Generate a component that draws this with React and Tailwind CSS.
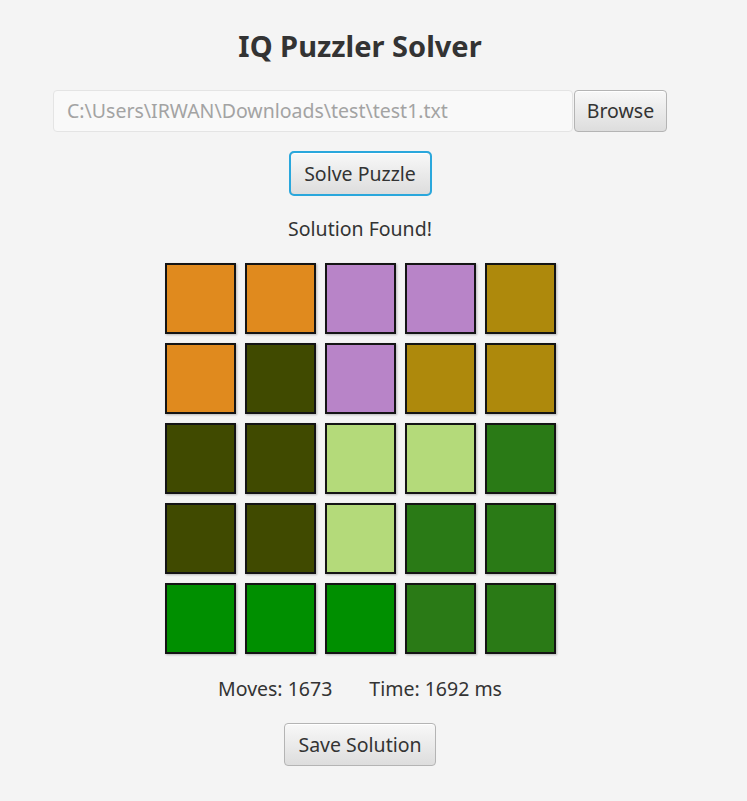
import React from 'react';

const grid = [
  ['#e08a1e', '#e08a1e', '#b884c8', '#b884c8', '#ae890c'],
  ['#e08a1e', '#404a00', '#b884c8', '#ae890c', '#ae890c'],
  ['#404a00', '#404a00', '#b4da7a', '#b4da7a', '#2a7a16'],
  ['#404a00', '#404a00', '#b4da7a', '#2a7a16', '#2a7a16'],
  ['#008f00', '#008f00', '#008f00', '#2a7a16', '#2a7a16'],
];

const btn =
  'rounded-[4px] border border-[#b4b4b4] bg-gradient-to-b from-[#f8f8f8] to-[#dddddd] text-[#333] shadow-[inset_0_1px_0_#ffffff]';

export default function App() {
  return (
    <div
      className="min-h-[801px] w-full bg-[#f4f4f4] text-[#333]"
      style={{ fontFamily: '"Noto Sans", "Open Sans", sans-serif' }}
    >
      <div className="flex w-[720px] flex-col items-center pt-[28px]">
        <h1 className="text-[29px] font-bold leading-[36px] text-[#333]">IQ Puzzler Solver</h1>

        <div className="mt-[26px] flex items-stretch">
          <div className="flex h-[42px] w-[520px] items-center rounded-[4px] border border-[#e4e4e4] bg-[#f9f9f9] px-[13px] text-[19.5px] text-[#a3a3a3]">
            C:\Users\IRWAN\Downloads\test\test1.txt
          </div>
          <button className={`${btn} ml-[1px] h-[42px] w-[93px] text-[19.5px]`}>Browse</button>
        </div>

        <button
          className={`${btn} mt-[20px] h-[43px] w-[141px] text-[19.5px] outline outline-2 outline-[#2aa7dc] outline-offset-[-1px]`}
        >
          Solve Puzzle
        </button>

        <p className="mt-[22px] text-[19.5px] leading-[24px]">Solution Found!</p>

        <div className="mt-[22px] grid grid-cols-5 gap-[9px]">
          {grid.flat().map((c, i) => (
            <div
              key={i}
              className="h-[71px] w-[71px] border-2 border-[#141414] shadow-[1px_1px_2px_rgba(0,0,0,0.25)]"
              style={{ backgroundColor: c }}
            />
          ))}
        </div>

        <div className="mt-[23px] flex gap-[37px] text-[19.5px] leading-[24px]">
          <span>Moves: 1673</span>
          <span>Time: 1692 ms</span>
        </div>

        <button className={`${btn} mt-[22px] h-[43px] w-[152px] text-[19.5px]`}>Save Solution</button>
      </div>
    </div>
  );
}
